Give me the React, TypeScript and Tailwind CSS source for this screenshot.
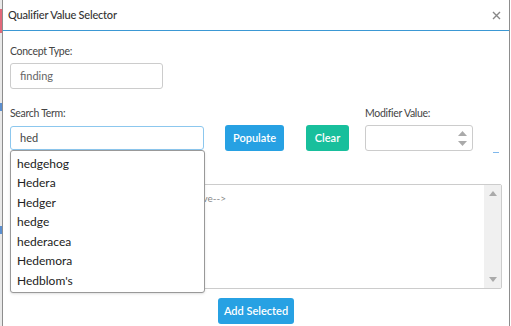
import React from "react";

const items = ["hedgehog", "Hedera", "Hedger", "hedge", "hederacea", "Hedemora", "Hedblom's"];

export default function App() {
  return (
    <div className="w-[511px] h-[326px] flex bg-white overflow-hidden" style={{ fontFamily: "Lato, 'Open Sans', sans-serif" }}>
      <div className="w-[2px] shrink-0 bg-[#e9e9e9] flex flex-col">
        <div className="mt-[9px] h-[24px] shrink-0 bg-[#e2687a]" />
        <div className="mt-[70px] h-[8px] shrink-0 bg-[#5b8fd0]" />
        <div className="mt-[115px] h-[8px] shrink-0 bg-[#5b8fd0]" />
      </div>
      <div className="w-[508px] shrink-0 border-x border-[#8d8d8d] flex flex-col relative">
        <div className="h-[31px] shrink-0 border-b border-[#3b98d4] flex items-center justify-between pl-[5px] pr-[7px]">
          <span className="text-[11px] font-medium tracking-[-0.2px] text-[#333]">Qualifier Value Selector</span>
          <svg width="9" height="9" viewBox="0 0 9 9" className="mr-[1px]">
            <path d="M1 1 L8 8 M8 1 L1 8" stroke="#888" strokeWidth="1.4" />
          </svg>
        </div>
        <div className="flex flex-col shrink-0 pl-[7px] pt-[13px]">
          <div className="text-[10.5px] tracking-[-0.3px] text-[#444] h-[14px] leading-[14px]">Concept Type:</div>
          <div className="mt-[5px] w-[153px] h-[26px] shrink-0 border border-[#ccc] rounded-[3px] flex items-center pl-[9px] text-[11px] text-[#666]">finding</div>
          <div className="mt-[17px] flex items-start shrink-0">
            <div className="flex flex-col w-[215px]">
              <div className="text-[10.5px] tracking-[-0.3px] text-[#444] h-[14px] leading-[14px]">Search Term:</div>
              <div className="mt-[6px] w-[194px] h-[24px] border border-[#8cc7ee] rounded-[3px] flex items-center pl-[9px] text-[11px] text-[#444]">hed</div>
            </div>
            <div className="mt-[19px] w-[59px] h-[26px] rounded-[3px] bg-[#27a1e3] text-white text-[11px] font-semibold flex items-center justify-center">Populate</div>
            <div className="mt-[19px] ml-[22px] w-[43px] h-[26px] rounded-[3px] bg-[#18bf9c] text-white text-[11px] font-semibold flex items-center justify-center">Clear</div>
            <div className="ml-[16px] flex flex-col">
              <div className="text-[10.5px] tracking-[-0.3px] text-[#444] h-[14px] leading-[14px]">Modifier Value:</div>
              <div className="mt-[5px] w-[108px] h-[26px] border border-[#ccc] rounded-[3px] flex justify-end items-center pr-[5px]">
                <div className="flex flex-col gap-[5px]">
                  <svg width="9" height="5" viewBox="0 0 9 5"><path d="M0 5 L4.5 0 L9 5Z" fill="#aaa" /></svg>
                  <svg width="9" height="5" viewBox="0 0 9 5"><path d="M0 0 L4.5 5 L9 0Z" fill="#aaa" /></svg>
                </div>
              </div>
            </div>
            <div className="ml-[20px] mt-[46px] w-[6px] h-[1px] bg-[#7fb8ec]" />
          </div>
          <div className="mt-[31px] w-[492px] h-[105px] shrink-0 border border-[#ccc] rounded-[2px] flex">
            <div className="flex-1 flex">
              <div className="w-[215px] shrink-0 overflow-hidden flex justify-end pt-[7px] text-[10px] leading-[12px] text-[#888] whitespace-nowrap">&lt;!--Select a term from the list above--&gt;</div>
            </div>
            <div className="w-[17px] bg-[#f0f0f0] flex flex-col items-center justify-between py-[6px]">
              <svg width="8" height="5" viewBox="0 0 8 5"><path d="M0 5 L4 0 L8 5Z" fill="#aaa" /></svg>
              <svg width="8" height="5" viewBox="0 0 8 5"><path d="M0 0 L4 5 L8 0Z" fill="#aaa" /></svg>
            </div>
          </div>
          <div className="mt-[9px] ml-[208px] w-[76px] h-[26px] shrink-0 rounded-[3px] bg-[#27a1e3] text-white text-[11px] font-semibold flex items-center justify-center">Add Selected</div>
        </div>
        <div className="absolute left-[7px] top-[150px] w-[195px] h-[143px] bg-white border border-[#999] rounded-[3px] flex flex-col pt-[3px] pl-[6px] shadow-sm">
          {items.map((t) => (
            <div key={t} className="h-[19.5px] shrink-0 flex items-center text-[12px] text-[#222]">{t}</div>
          ))}
        </div>
      </div>
    </div>
  );
}
